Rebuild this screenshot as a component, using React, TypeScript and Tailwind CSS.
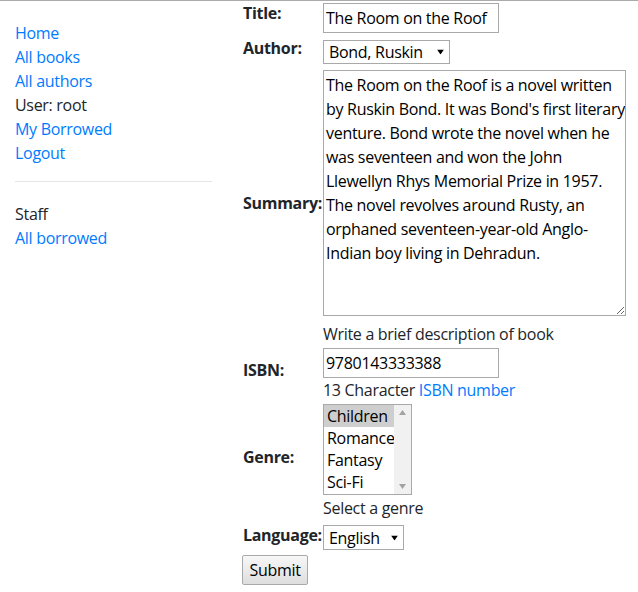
import { ReactNode } from 'react';

const summaryLines = [
  'The Room on the Roof is a novel written',
  "by Ruskin Bond. It was Bond's first literary",
  'venture. Bond wrote the novel when he',
  'was seventeen and won the John',
  'Llewellyn Rhys Memorial Prize in 1957.',
  'The novel revolves around Rusty, an',
  'orphaned seventeen-year-old Anglo-',
  'Indian boy living in Dehradun.',
];

function Arrow({ className = '' }: { className?: string }) {
  return (
    <svg width="7" height="5" viewBox="0 0 7 5" className={className}>
      <path d="M0 0h7L3.5 5z" fill="currentColor" />
    </svg>
  );
}

function FakeSelect({ value, width }: { value: string; width: string }) {
  return (
    <div className={`relative ${width}`}>
      <select
        defaultValue={value}
        className="w-full h-full appearance-none bg-white border border-[#a9a9a9] pl-[5px] pr-5 leading-5 text-[#000] outline-none"
      >
        <option>{value}</option>
      </select>
      <Arrow className="absolute right-[6px] top-1/2 -translate-y-1/2 text-black pointer-events-none" />
    </div>
  );
}

function Row({ label, labelClass = 'mb-2', children }: { label: string; labelClass?: string; children: ReactNode }) {
  return (
    <>
      <div className="flex items-center">
        <label className={`inline-block font-bold whitespace-nowrap ${labelClass}`}>{label}</label>
      </div>
      <div className="flex flex-col items-start">{children}</div>
    </>
  );
}

export default function App() {
  const genres = ['Children', 'Romance', 'Fantasy', 'Sci-Fi'];

  return (
    <div className="min-h-screen flex bg-white border-t border-[#ababab] font-['Open_Sans','Liberation_Sans',sans-serif] text-base leading-6 tracking-[-0.3px] text-[#212529]">
      {/* Sidebar */}
      <div className="w-[227px] shrink-0 px-[15px] pt-5">
        <ul>
          <li><a href="#" className="text-[#007bff]">Home</a></li>
          <li><a href="#" className="text-[#007bff]">All books</a></li>
          <li><a href="#" className="text-[#007bff]">All authors</a></li>
          <li>User: root</li>
          <li><a href="#" className="text-[#007bff]">My Borrowed</a></li>
          <li><a href="#" className="text-[#007bff]">Logout</a></li>
        </ul>
        <hr className="mt-4 mb-5 border-t border-[#e5e5e5]" />
        <ul>
          <li>Staff</li>
          <li><a href="#" className="text-[#007bff]">All borrowed</a></li>
        </ul>
      </div>

      {/* Form */}
      <div className="pl-4">
        <div className="grid grid-cols-[80px_auto] justify-start">
          <Row label="Title:">
            <div className="pt-[2px]">
              <input
                defaultValue="The Room on the Roof"
                className="h-[30px] w-[176px] border border-[#a9a9a9] px-[2px] text-black outline-none"
              />
            </div>
          </Row>

          <Row label="Author:" labelClass="mb-1">
            <div className="pt-[7px] pb-[3px] flex">
              <FakeSelect value="Bond, Ruskin" width="w-[127px] h-6" />
            </div>
          </Row>

          <Row label="Summary:">
            <div className="pt-[3px]">
              <textarea
                wrap="off"
                defaultValue={summaryLines.join('\n')}
                className="block h-[246px] w-[303px] border border-[#a9a9a9] p-[2px] text-black leading-6 overflow-hidden resize outline-none"
              />
            </div>
            <span className="mt-[6px] h-6">Write a brief description of book</span>
          </Row>

          <Row label="ISBN:">
            <div className="pt-[2px]">
              <input
                defaultValue="9780143333388"
                className="h-[30px] w-[176px] border border-[#a9a9a9] px-[2px] text-black outline-none"
              />
            </div>
            <span className="h-6">
              13 Character <a href="#" className="text-[#007bff]">ISBN number</a>
            </span>
          </Row>

          <Row label="Genre:">
            <div className="pt-[2px]">
              <div className="flex h-[91px] w-[89px] border border-[#a9a9a9] bg-white">
                <div className="flex-1 overflow-hidden">
                  {genres.map((g, i) => (
                    <div
                      key={g}
                      className={`h-[22px] pl-[3px] leading-[22px] text-black whitespace-nowrap ${i === 0 ? 'bg-[#cecece]' : ''}`}
                    >
                      {g}
                    </div>
                  ))}
                </div>
                <div className="w-[17px] bg-[#f1f1f1] flex flex-col items-center justify-between py-[5px] text-[#a3a3a3]">
                  <Arrow className="rotate-180" />
                  <Arrow />
                </div>
              </div>
            </div>
            <span className="mt-[1px] h-6">Select a genre</span>
          </Row>

          <Row label="Language:" labelClass="">
            <div className="pt-[5px] flex">
              <FakeSelect value="English" width="w-[81px] h-[25px]" />
            </div>
          </Row>
        </div>

        <button className="mt-[5px] -ml-px h-[30px] w-[66px] rounded-[2px] border border-[#a9a9a9] bg-gradient-to-b from-[#f7f7f7] to-[#dedede] text-black">
          Submit
        </button>
      </div>
    </div>
  );
}
